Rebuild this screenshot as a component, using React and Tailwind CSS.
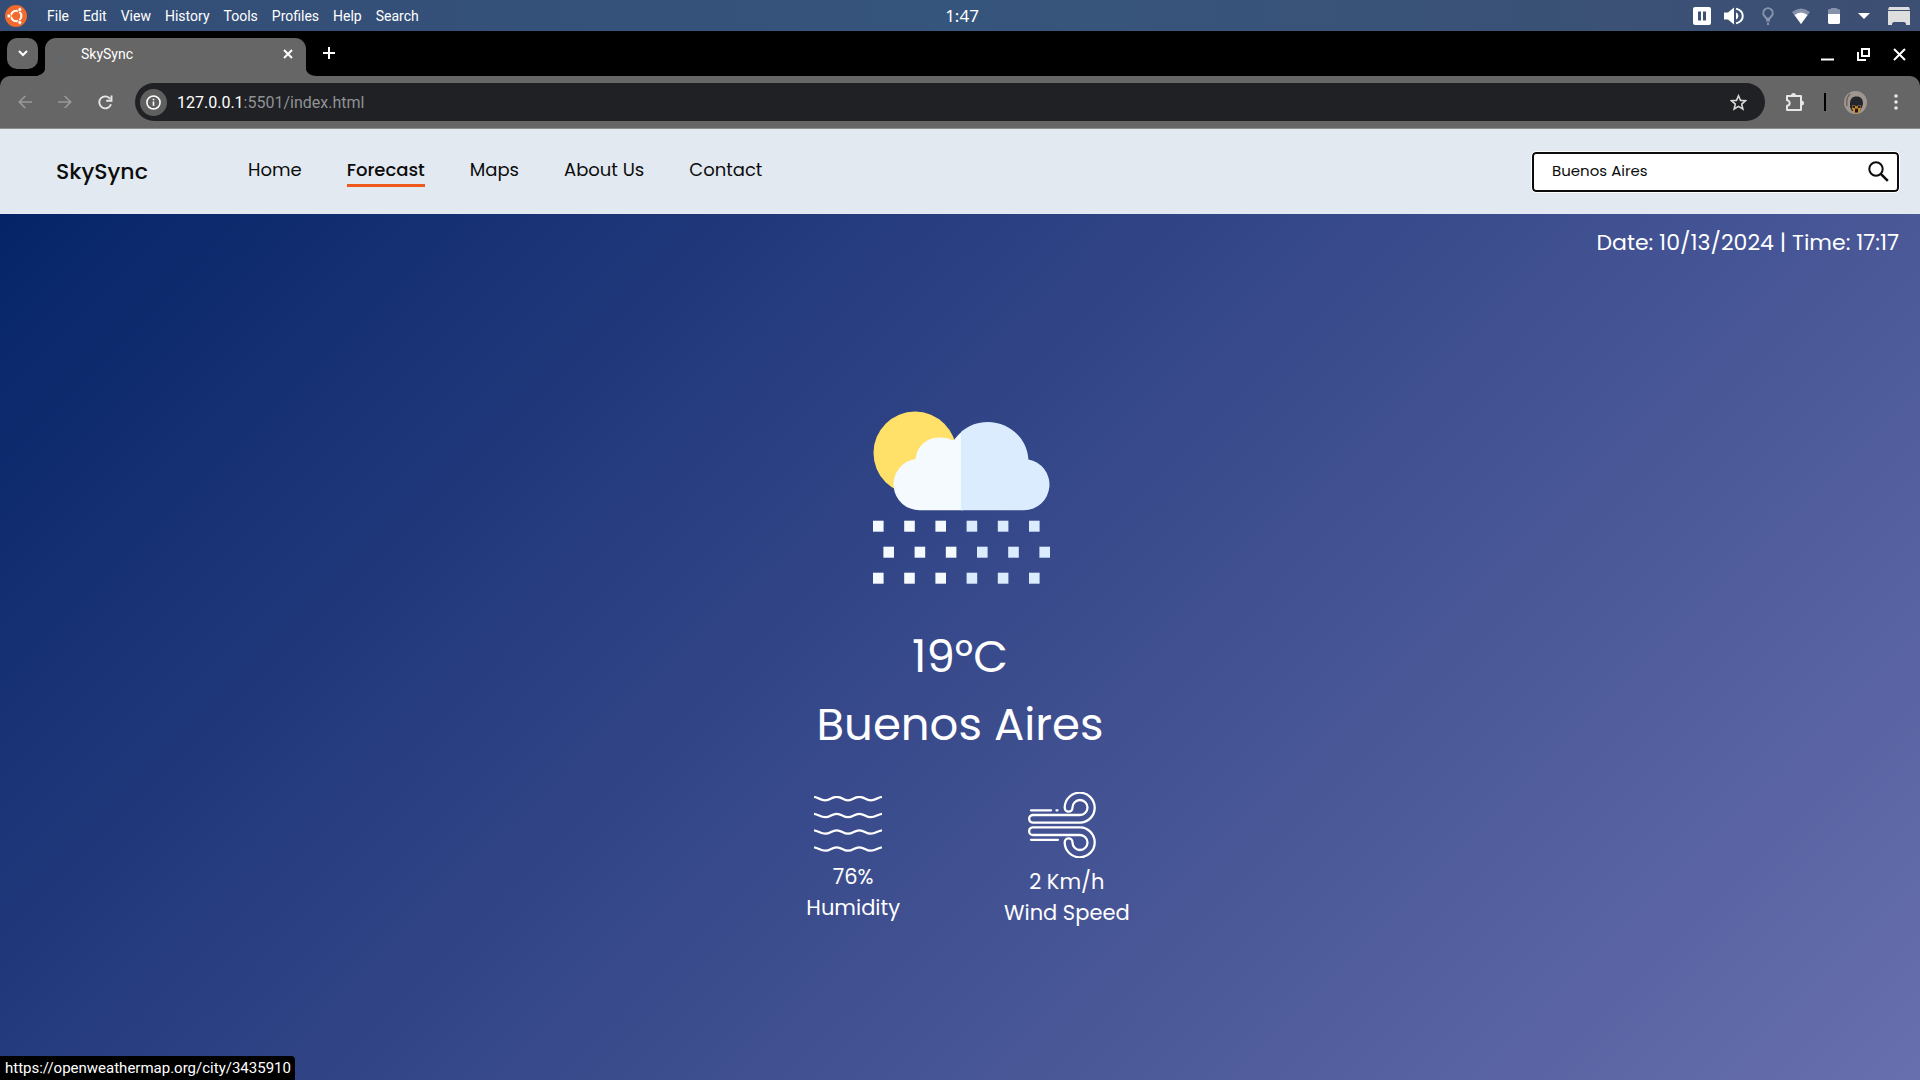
const menus = ["File", "Edit", "View", "History", "Tools", "Profiles", "Help", "Search"];

const links = [
  { label: "Home", active: false },
  { label: "Forecast", active: true },
  { label: "Maps", active: false },
  { label: "About Us", active: false },
  { label: "Contact", active: false },
];

function UbuntuLogo() {
  return (
    <svg className="size-[22px]" viewBox="0 0 22 22" aria-hidden="true">
      <circle cx="11" cy="11" r="11" fill="#f26a2c" />
      <circle cx="11.2" cy="11" r="5.2" fill="none" stroke="#fff" strokeWidth="2" />
      <g stroke="#f26a2c" strokeWidth="1.1">
        <path d="M1 11h7M16 2.3l-3.4 6M16 19.7l-3.4-6" />
      </g>
      <g fill="#fff" stroke="#f26a2c" strokeWidth=".8">
        <circle cx="3.9" cy="11" r="2" />
        <circle cx="14.8" cy="4.6" r="2" />
        <circle cx="14.8" cy="17.4" r="2" />
      </g>
    </svg>
  );
}

function PauseIcon() {
  return (
    <svg className="size-[18px]" viewBox="0 0 18 18" aria-hidden="true">
      <rect width="18" height="18" rx="2" fill="#fff" />
      <path d="M5 4.5h3v9H5zM10 4.5h3v9h-3z" fill="#3d5274" />
    </svg>
  );
}

function VolumeIcon() {
  return (
    <svg className="h-[18px] w-5" viewBox="0 0 20 18" aria-hidden="true">
      <path d="M0 5.5h4L10 .5v17l-6-5H0z" fill="#fff" />
      <path d="M12 5.2a4.2 4.2 0 0 1 0 7.6z" fill="#fff" />
      <path d="M12 1.6c9 2.4 9 12.4 0 14.8" fill="none" stroke="#fff" strokeWidth="2" />
    </svg>
  );
}

function BulbIcon() {
  return (
    <svg className="h-[18px] w-3" viewBox="0 0 12 18" fill="none" aria-hidden="true">
      <path d="M4.500 11.500 2.400 9a4.700 4.700 0 1 1 7.200 0L7.500 11.500z" stroke="#8592aa" strokeWidth="2" />
      <path d="M4 12h4v2.500H4zM5 15.500h2V18H5z" fill="#8592aa" />
    </svg>
  );
}

function WifiIcon() {
  return (
    <svg className="h-4 w-[18px]" viewBox="0 0 18 16" aria-hidden="true">
      <path d="M9 16 0 4Q9-3 18 4z" fill="#8592aa" />
      <path d="M9 16 2.500 7Q9 2 15.500 7z" fill="#fff" />
    </svg>
  );
}

function BatteryIcon() {
  return (
    <svg className="h-4 w-3" viewBox="0 0 12 16" aria-hidden="true">
      <path d="M3 0h6v1h2l1 1v5H0V2l1-1h2z" fill="#8592aa" />
      <path d="M0 6h12v9l-1 1H1l-1-1z" fill="#fff" />
    </svg>
  );
}

function DesktopIcon() {
  return (
    <svg className="h-[18px] w-[22px]" viewBox="0 0 22 18" fill="#dedede" aria-hidden="true">
      <path d="M1 0h20l1 3H0zM0 4h22v14h-4v-1.500l-1.500-1.500h-11L4 16.500V18H0z" />
    </svg>
  );
}

function SystemBar() {
  return (
    <div className="grid h-[31px] grid-cols-[1fr_auto_1fr] items-center bg-linear-to-r from-[#334d76] via-[#36557c] to-[#3d4f73] font-['Roboto',sans-serif] text-white">
      <div className="flex items-center pl-[5px]">
        <UbuntuLogo />
        <nav className="ml-5 flex gap-[14px] text-sm">
          {menus.map((m) => (
            <button key={m} type="button">{m}</button>
          ))}
        </nav>
      </div>
      <time className="pl-1 font-['Noto_Sans',sans-serif] text-[17px]">1:47</time>
      <div className="flex items-center justify-end pr-[10px]">
        <PauseIcon />
        <span className="w-[13px]" />
        <VolumeIcon />
        <span className="w-[18px]" />
        <BulbIcon />
        <span className="w-[18px]" />
        <WifiIcon />
        <span className="w-[18px]" />
        <BatteryIcon />
        <span className="w-[18px]" />
        <svg className="h-1.5 w-3" viewBox="0 0 12 6" aria-hidden="true">
          <path d="M0 0h12L6 6z" fill="#fff" />
        </svg>
        <span className="w-[18px]" />
        <DesktopIcon />
      </div>
    </div>
  );
}

function TabStrip() {
  return (
    <div className="flex h-[45px] items-end bg-black font-['Roboto',sans-serif] text-white">
      <button type="button" aria-label="Search tabs" className="mb-[7px] ml-[7px] grid size-[31px] place-items-center rounded-[10px] bg-[#666]">
        <svg className="h-[7px] w-[10px]" viewBox="0 0 10 7" fill="none" aria-hidden="true">
          <path d="m1 1 4 4 4-4" stroke="#fff" strokeWidth="2" />
        </svg>
      </button>
      <svg className="-mr-px h-3 w-2" viewBox="0 0 8 12" aria-hidden="true">
        <path d="M8 0v12H-4Q8 12 8 0" fill="#666" />
      </svg>
      <div className="flex h-[38px] w-[261px] items-center rounded-t-[11px] bg-[#666] pr-[13px] pl-[11px]">
        <svg className="size-[14px]" viewBox="0 0 14 14" fill="none" aria-hidden="true">
          <circle cx="7" cy="7" r="6.500" stroke="#5c6672" strokeDasharray="2 1" />
          <path d="m6 5 2 2-2 3" stroke="#5c6672" />
        </svg>
        <span className="ml-[11px] flex-1 pb-1.5 text-sm">SkySync</span>
        <button type="button" aria-label="Close tab" className="pb-1.5">
          <svg className="size-[10px]" viewBox="0 0 10 10" aria-hidden="true">
            <path d="m1 1 8 8M9 1 1 9" stroke="#fff" strokeWidth="2" />
          </svg>
        </button>
      </div>
      <svg className="-ml-px h-3 w-3" viewBox="0 0 12 12" aria-hidden="true">
        <path d="M0 0v12h12Q0 12 0 0" fill="#666" />
      </svg>
      <button type="button" aria-label="New tab" className="mb-[17px] ml-[6px]">
        <svg className="size-3" viewBox="0 0 12 12" aria-hidden="true">
          <path d="M6 0v12M0 6h12" stroke="#fff" strokeWidth="2" />
        </svg>
      </button>
      <div className="mb-[15px] ml-auto flex items-center gap-[23px] pr-[14px]">
        <button type="button" aria-label="Minimize">
          <svg className="size-[13px]" viewBox="0 0 13 13" aria-hidden="true">
            <path d="M0 11.500h13" stroke="#fff" strokeWidth="2" />
          </svg>
        </button>
        <button type="button" aria-label="Restore">
          <svg className="size-[13px]" viewBox="0 0 13 13" fill="none" stroke="#fff" strokeWidth="2" aria-hidden="true">
            <path d="M5 1h7v7H5zM1 4v8h8" />
          </svg>
        </button>
        <button type="button" aria-label="Close window">
          <svg className="size-[13px]" viewBox="0 0 13 13" aria-hidden="true">
            <path d="m1 1 11 11M12 1 1 12" stroke="#fff" strokeWidth="2" />
          </svg>
        </button>
      </div>
    </div>
  );
}

function ArrowIcon({ flip }) {
  return (
    <svg className={flip ? "size-[14px] rotate-180" : "size-[14px]"} viewBox="0 0 14 14" fill="none" stroke="#999" strokeWidth="1.700" aria-hidden="true">
      <path d="M14 7H1.500M7.300 1 1.300 7l6 6" />
    </svg>
  );
}

function Toolbar() {
  return (
    <div className="bg-black">
      <div className="flex h-[53px] items-center rounded-t-[10px] border-b border-[#8d8d8d] bg-[#666] font-['Roboto',sans-serif]">
        <button type="button" aria-label="Back" className="ml-[18px]"><ArrowIcon /></button>
        <button type="button" aria-label="Forward" className="ml-[26px]"><ArrowIcon flip /></button>
        <button type="button" aria-label="Reload" className="ml-[26px]">
          <svg className="size-[15px]" viewBox="0 0 15 15" fill="none" stroke="#e6e6e6" strokeWidth="1.900" aria-hidden="true">
            <path d="M13 9.300A6 6 0 1 1 12.300 4" />
            <path d="M13.500.5v5.300H8.200" />
          </svg>
        </button>
        <div className="ml-[22px] flex h-[38px] flex-1 items-center rounded-full bg-[#202124] pr-[18px] pl-[5px]">
          <span className="grid size-[27px] place-items-center rounded-full bg-[#5f5f5f]">
            <svg className="size-[15px]" viewBox="0 0 16 16" fill="none" stroke="#fff" strokeWidth="1.700" aria-hidden="true">
              <circle cx="8" cy="8" r="7" />
              <path d="M8 7v4.500M8 4v1.700" />
            </svg>
          </span>
          <a href="#address" className="ml-[10px] pt-0.5 text-base text-[#8f9296]">
            <span className="text-white">127.0.0.1</span>:5501/index.html
          </a>
          <button type="button" aria-label="Bookmark" className="ml-auto">
            <svg className="size-[17px]" viewBox="0 0 17 17" fill="none" stroke="#d8d8d8" strokeWidth="1.600" aria-hidden="true">
              <path d="m8.500 1.800 2 4.600 5 .4-3.800 3.300 1.200 4.900-4.400-2.600L4.100 15l1.200-4.900L1.500 6.800l5-.4z" />
            </svg>
          </button>
        </div>
        <button type="button" aria-label="Extensions" className="ml-[20px]">
          <svg className="h-[19px] w-[19px]" viewBox="0 0 19 19" aria-hidden="true">
            <path d="M2 3h14v14H2v-4.300a2.700 2.700 0 0 0 0-5.400z" fill="none" stroke="#e6e6e6" strokeWidth="2" strokeLinejoin="round" />
            <path d="M6 2.500a2.500 2.500 0 0 1 5 0zM16.500 7.500a2.500 2.500 0 0 1 0 5z" fill="#e6e6e6" />
          </svg>
        </button>
        <span className="ml-5 h-[18px] w-0.5 bg-black" />
        <svg className="ml-[18px] size-[23px]" viewBox="0 0 23 23" role="img" aria-label="Profile">
          <circle cx="11.500" cy="11.500" r="11.500" fill="#9f978f" />
          <path d="M3 15c-1-5 0-9 3-12" stroke="#6d655f" strokeWidth="1.500" fill="none" />
          <path d="M6 13c0-5 2-7.500 6.500-7.500S19 8 19 13l-1 3-2 4H8l-2-4z" fill="#24262d" />
          <path d="M8 14.500h3l1.500 1 1.500-1h3v3l-2 4.500h-5l-2-4.500z" fill="#c88a2e" />
          <path d="M8.500 15h2.500v2H8.500zM14 15h2.500v2H14zM11 17.500h3v4h-3z" fill="#211b19" />
        </svg>
        <button type="button" aria-label="Browser menu" className="mr-[22px] ml-[27px]">
          <svg className="h-4 w-1" viewBox="0 0 4 16" fill="#e6e6e6" aria-hidden="true">
            <circle cx="2" cy="2" r="1.800" /><circle cx="2" cy="8" r="1.800" /><circle cx="2" cy="14" r="1.800" />
          </svg>
        </button>
      </div>
    </div>
  );
}

function SiteHeader() {
  return (
    <header className="flex h-[85px] items-center bg-[#e2e9f1] pr-[21px] pl-14 text-[#0c0c0c]">
      <h1 className="w-48 text-[22px] font-medium">SkySync</h1>
      <nav className="flex gap-[45px] text-lg leading-7">
        {links.map((l) => (
          <a key={l.label} href={"#" + l.label} className={l.active ? "border-b-[3px] border-[#ee5a1c] font-medium" : "border-b-[3px] border-transparent"}>
            {l.label}
          </a>
        ))}
      </nav>
      <form className="ml-auto flex h-10 w-[367px] items-center rounded border-2 border-[#0c0c0c] bg-white pr-2 pl-[18px] outline outline-white">
        <input aria-label="City" defaultValue="Buenos Aires" className="min-w-0 flex-1 bg-transparent text-[15px] outline-none" />
        <button type="button" aria-label="Search city">
          <svg className="size-[21px]" viewBox="0 0 21 21" fill="none" stroke="#0c0c0c" aria-hidden="true">
            <circle cx="8" cy="8" r="6.700" strokeWidth="2" />
            <path d="m12.800 12.800 7 7" strokeWidth="2.600" />
          </svg>
        </button>
      </form>
    </header>
  );
}

const rain = [
  { y: 109.7, x: 0 },
  { y: 135.7, x: 10.4 },
  { y: 161.7, x: 0 },
];

function WeatherIcon() {
  return (
    <svg className="ml-0.5 h-[173px] w-[177px]" viewBox="0 0 177 173" role="img" aria-label="Rain showers">
      <circle cx="42" cy="42" r="41.500" fill="#ffe16a" />
      <path d="M47 99.200A25.800 25.800 0 0 1 42.500 47.900C44.500 34 54 26.600 67.500 26.600Q74.500 26.600 80.500 29.600Q84 24.400 90 19.500V99.200Z" fill="#f5faff" />
      <path d="M88 99.200V21C95.500 14.400 104.500 10.900 114.500 10.900C137 10.900 154.500 27.900 155.400 48.400A25.600 25.600 0 0 1 151 99.200Z" fill="#dbecff" />
      {rain.map((row) =>
        [0, 1, 2, 3, 4, 5].map((i) => (
          <rect key={row.y + "-" + i} x={row.x + i * 31.2} y={row.y} width="10.600" height="11" fill={i < 3 ? "#f5faff" : "#dbecff"} />
        ))
      )}
    </svg>
  );
}

function HumidityIcon() {
  return (
    <svg className="h-[56px] w-[68px]" viewBox="0 0 68 56" fill="none" stroke="#fff" strokeWidth="2.300" aria-hidden="true">
      {[2.6, 19.5, 36, 53].map((y) => (
        <path key={y} transform={`translate(0 ${y})`} d="M0-1.700C5-1 6 1.700 11.300 1.700S17.500-1.700 22.700-1.700 28.800 1.700 34 1.700 40.200-1.700 45.300-1.700 51.500 1.700 56.700 1.700 63-1 68-1.700" />
      ))}
    </svg>
  );
}

function WindIcon() {
  return (
    <svg className="h-[66px] w-[68px]" viewBox="0 0 68 66" fill="none" stroke="#fff" strokeWidth="2.300" strokeLinecap="round" aria-hidden="true">
      <path d="M5 23H52a7.500 7.500 0 1 0-7.500-7.500c0 5.500-7.800 5.500-7.800 0A15 15 0 1 1 52 30.700H5a3.800 3.800 0 0 1 0-7.700Z" />
      <path d="M5 43H52a7.500 7.500 0 1 1-7.500 7.500c0-5.500-7.800-5.500-7.800 0A15 15 0 1 0 52 35.300H5a3.800 3.800 0 0 0 0 7.700Z" />
      <path d="M3 18.300h20M28.500 18.300h1M3 47.800h27" />
    </svg>
  );
}

export default function App() {
  return (
    <div className="flex min-h-screen flex-col font-['Poppins','Inter',sans-serif]">
      <SystemBar />
      <TabStrip />
      <Toolbar />
      <SiteHeader />
      <main className="relative flex flex-1 flex-col bg-[linear-gradient(135deg,#052468_0%,#384a8b_50%,#686fae_100%)] text-white">
        <p className="self-end pt-[15px] pr-[21px] text-[22px] leading-7">Date: 10/13/2024 | Time: 17:17</p>
        <section className="mt-[154px] flex flex-col items-center">
          <WeatherIcon />
          <p className="mt-[39px] text-[45px] leading-[68px]">19°C</p>
          <h2 className="text-[45px] leading-[68px]">Buenos Aires</h2>
          <div className="mt-[33px] flex items-start gap-[104px] pl-4 text-center text-[21px] leading-[31px]">
            <div>
              <div className="mr-[10px] flex justify-center pt-1 pb-[9px]"><HumidityIcon /></div>
              <p>76%</p>
              <p>Humidity</p>
            </div>
            <div>
              <div className="mr-[10px] flex justify-center pb-2"><WindIcon /></div>
              <p>2 Km/h</p>
              <p>Wind Speed</p>
            </div>
          </div>
        </section>
        <a href="https://openweathermap.org/city/3435910" className="absolute bottom-0 left-0 flex h-6 items-center rounded-tr bg-black pr-1 pl-[5px] font-['Roboto',sans-serif] text-[15px]">
          https://openweathermap.org/city/3435910
        </a>
      </main>
    </div>
  );
}
